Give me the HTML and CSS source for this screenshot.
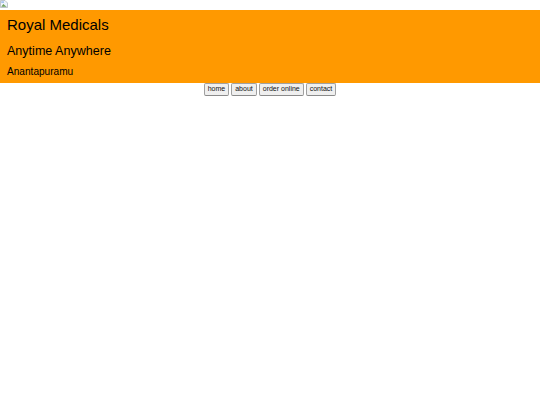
FILE: index.html
```html
<!DOCTYPE html>
<html>
<head>
<meta charset="utf-8">
<title>Royal Medicals</title>
<link rel="stylesheet" href="styles.css">
</head>
<body>
<div class="logo"><svg width="8" height="8" viewBox="0 0 8 8"><path d="M0.5 0.5H5L7.5 3V7.5H0.5Z" fill="#eef3fb" stroke="#a8b0b8" stroke-width="0.7"/><path d="M1.2 6.8L3.4 4L5 5.6L6.8 6.8Z" fill="#6f9f5a"/><path d="M1.2 1.2H4V3H1.2Z" fill="#a9c4ee"/></svg></div>
<header class="banner">
<h1>Royal Medicals</h1>
<h2>Anytime Anywhere</h2>
<p>Anantapuramu</p>
</header>
<nav class="menu">
<button>home</button>
<button>about</button>
<button>order online</button>
<button>contact</button>
</nav>
</body>
</html>
```
FILE: styles.css
```css
html, body { margin: 0; padding: 0; background: #fff; }
body { font-family: "Liberation Sans", Arial, sans-serif; color: #000; }
.logo { height: 10px; line-height: 0; }
.banner { background: #ff9900; height: 73px; padding: 6px 7px 0; box-sizing: border-box; }
.banner h1 { margin: 0 0 10px; font-size: 15px; line-height: 18px; font-weight: 400; }
.banner h2 { margin: 0 0 7px; font-size: 12.55px; line-height: 15px; font-weight: 400; }
.banner p { margin: 0; font-size: 10.1px; line-height: 12px; }
.menu { display: flex; justify-content: center; gap: 2px; }
.menu button { font-family: "Liberation Sans", Arial, sans-serif; font-size: 7px; line-height: 8px; height: 12.5px; padding: 0 3px; margin: 0; background: #efefef; color: #111; border: 1px solid #a0a0a0; border-bottom-color: #8a8a8a; border-radius: 2px; }
```
